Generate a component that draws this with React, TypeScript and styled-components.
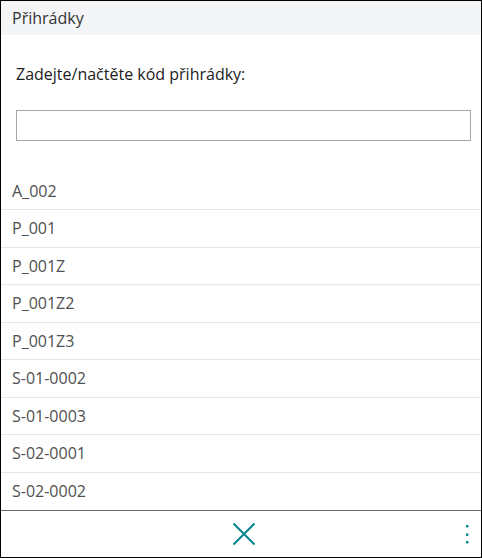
import styled, { createGlobalStyle } from 'styled-components'

const GlobalStyle = createGlobalStyle`
  html, body {
    margin: 0;
    padding: 0;
    background: #ffffff;
  }
  * {
    box-sizing: border-box;
  }
`

const Frame = styled.div`
  width: 482px;
  height: 558px;
  border: 1px solid #000;
  display: flex;
  flex-direction: column;
  font-family: 'Open Sans', 'Noto Sans', sans-serif;
  background: #fff;
`

const Header = styled.div`
  height: 34px;
  background: #f4f5f7;
  display: flex;
  align-items: center;
  padding-left: 11px;
  font-size: 16px;
  color: #333;
`

const Body = styled.div`
  flex: 1;
  display: flex;
  flex-direction: column;
`

const Prompt = styled.label`
  display: flex;
  flex-direction: column;
  gap: 25px;
  padding: 28px 11px 0 15px;
  font-size: 16px;
  color: #212121;
`

const Input = styled.input`
  width: 455px;
  height: 31px;
  border: 1px solid #a6a6a6;
  outline: none;
  font: inherit;
`

const List = styled.ul`
  list-style: none;
  margin: 32px 0 0;
  padding: 0;
`

const Row = styled.li`
  height: 37.5px;
  display: flex;
  align-items: center;
  padding-left: 11px;
  font-size: 16px;
  color: #505050;
  border-bottom: 1px solid #e6e6e6;

  &:last-child {
    border-bottom: none;
  }
`

const Footer = styled.div`
  margin-top: auto;
  height: 47px;
  border-top: 1px solid #6a6a6a;
  display: grid;
  grid-template-columns: 1fr auto 1fr;
  align-items: center;
`

const IconButton = styled.button`
  background: none;
  border: none;
  padding: 0;
  display: flex;
  align-items: center;
  justify-content: center;
  cursor: pointer;
  color: #00838f;
`

const CloseButton = styled(IconButton)`
  margin-left: 6px;
`

const MoreButton = styled(IconButton)`
  justify-self: end;
  margin-right: 12px;
`

const bins = [
  'A_002',
  'P_001',
  'P_001Z',
  'P_001Z2',
  'P_001Z3',
  'S-01-0002',
  'S-01-0003',
  'S-02-0001',
  'S-02-0002',
]

export default function App() {
  return (
    <>
      <GlobalStyle />
      <Frame>
        <Header>Přihrádky</Header>
        <Body>
          <Prompt>
            <span>Zadejte/načtěte kód přihrádky:</span>
            <Input type='text' />
          </Prompt>
          <List>
            {bins.map((b) => (
              <Row key={b}>{b}</Row>
            ))}
          </List>
          <Footer>
            <span />
            <CloseButton aria-label='Zavřít'>
              <svg width='24' height='24' viewBox='0 0 24 24'>
                <path d='M1.5 1.5 L22.5 22.5 M22.5 1.5 L1.5 22.5' stroke='currentColor' strokeWidth='2' fill='none' />
              </svg>
            </CloseButton>
            <MoreButton aria-label='Více'>
              <svg width='4' height='20' viewBox='0 0 4 20'>
                <rect x='1' y='1' width='2.4' height='2.4' fill='currentColor' />
                <rect x='1' y='9.5' width='2.4' height='2.4' fill='currentColor' />
                <rect x='1' y='17' width='2.4' height='2.4' fill='currentColor' />
              </svg>
            </MoreButton>
          </Footer>
        </Body>
      </Frame>
    </>
  )
}
